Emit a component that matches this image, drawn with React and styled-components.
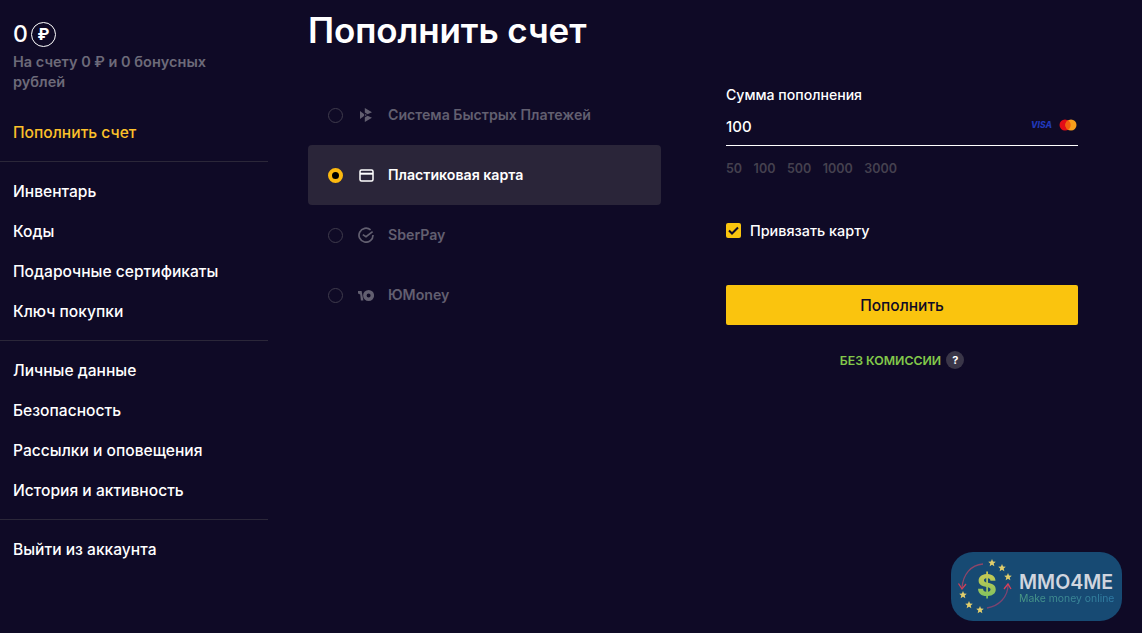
import React from 'react';
import styled, { createGlobalStyle } from 'styled-components';

const GlobalStyle = createGlobalStyle`
  html, body {
    margin: 0;
    padding: 0;
    height: 100%;
    background: #0f0a26;
    overflow: hidden;
  }
  body {
    font-family: Inter, "Liberation Sans", sans-serif;
    color: #fff;
  }
  * { box-sizing: border-box; }
`;

const menuGroups = [
  ['Инвентарь', 'Коды', 'Подарочные сертификаты', 'Ключ покупки'],
  ['Личные данные', 'Безопасность', 'Рассылки и оповещения', 'История и активность'],
  ['Выйти из аккаунта'],
];

const SbpIcon = () => (
  <svg width="12" height="14" viewBox="0 0 12 14" fill="currentColor">
    <path d="M0 3 4 6V8L0 11Z" />
    <path d="M4.800 0 12 4.300 7.500 6.200 4.800 4.500Z" />
    <path d="M4.800 9.500 7.500 7.800 12 9.700 4.800 14Z" />
    <path d="M4.800 5.400 7 6.900 4.800 8.500Z" opacity=".7" />
  </svg>
);

const CardIcon = () => (
  <svg width="15" height="13" viewBox="0 0 15 13" fill="none" stroke="currentColor">
    <rect x="1" y="1" width="13" height="11" rx="1.500" strokeWidth="1.500" />
    <path d="M1 4.700H14" strokeWidth="2" />
  </svg>
);

const SberIcon = () => (
  <svg width="16" height="16" viewBox="0 0 16 16" fill="none" stroke="currentColor" strokeWidth="1.700">
    <path d="M12.600 2.900A7 7 0 1 0 15 8" />
    <path d="M4.800 7.600 8 9.600 14.600 4.600" />
  </svg>
);

const YooIcon = () => (
  <svg width="16" height="11" viewBox="0 0 16 11" fill="currentColor">
    <path d="M0 1H3.600L5.400 10.500H2.900L2.200 4.600 0 3.600Z" />
    <path fillRule="evenodd" d="M10.600 0a5.400 5.400 0 1 1 0 11 5.400 5.400 0 0 1 0-11Zm0 3.500a2 2 0 1 0 0 4 2 2 0 0 0 0-4Z" />
  </svg>
);

const methods = [
  { label: 'Система Быстрых Платежей', icon: <SbpIcon /> },
  { label: 'Пластиковая карта', icon: <CardIcon />, active: true },
  { label: 'SberPay', icon: <SberIcon /> },
  { label: 'ЮMoney', icon: <YooIcon /> },
];

const amounts = [50, 100, 500, 1000, 3000];

const starSpots = [
  [41, 11],
  [51, 16],
  [57, 25],
  [12, 43],
  [18, 53],
  [29, 58],
];

function starPoints(cx, cy, r) {
  const points = [];
  for (let i = 0; i < 10; i++) {
    const radius = i % 2 ? r * 0.45 : r;
    const angle = (Math.PI / 5) * i - Math.PI / 2;
    points.push(`${cx + radius * Math.cos(angle)},${cy + radius * Math.sin(angle)}`);
  }
  return points.join(' ');
}

function Logo() {
  return (
    <Badge>
      <svg width="66" height="69" viewBox="0 0 66 69" fill="none" strokeWidth="1.300">
        <path d="M32 12C20 13 12 22 11 36" stroke="#8f4668" />
        <path d="M7.500 31.500 11 37 15 32" stroke="#cf3f58" />
        <path d="M36 56C48 54 57 45 57 33" stroke="#7d4470" />
        <path d="M53 37 57 32 60 37" stroke="#d8405a" />
        {starSpots.map(([x, y]) => (
          <polygon key={x} points={starPoints(x, y, 4)} fill="#e0cd6c" />
        ))}
      </svg>
      <DollarSign>$</DollarSign>
      <BadgeText>
        <BadgeTitle>MMO4ME</BadgeTitle>
        <BadgeSub>Make money online</BadgeSub>
      </BadgeText>
    </Badge>
  );
}

export default function App() {
  return (
    <Page>
      <GlobalStyle />
      <Sidebar>
        <Balance>
          0 <RubleCircle>₽</RubleCircle>
        </Balance>
        <BalanceNote>На счету 0 ₽ и 0 бонусных рублей</BalanceNote>
        <TopUpLink>Пополнить счет</TopUpLink>
        {menuGroups.map(group => (
          <MenuGroup key={group[0]}>
            {group.map(item => (
              <MenuItem key={item}>{item}</MenuItem>
            ))}
          </MenuGroup>
        ))}
      </Sidebar>
      <Main>
        <Title>Пополнить счет</Title>
        <Columns>
          <Methods>
            {methods.map(m => (
              <Method key={m.label} $active={m.active}>
                <Radio $active={m.active} />
                <MethodIcon>{m.icon}</MethodIcon>
                <MethodLabel>{m.label}</MethodLabel>
              </Method>
            ))}
          </Methods>
          <Form>
            <FieldLabel>Сумма пополнения</FieldLabel>
            <AmountRow>
              <AmountValue>100</AmountValue>
              <PayLogos>
                <VisaMark>VISA</VisaMark>
                <MasterMark>
                  <svg width="18" height="12" viewBox="0 0 18 12">
                    <circle cx="6" cy="6" r="5.500" fill="#e30d17" />
                    <circle cx="12" cy="6" r="5.500" fill="#f89e1b" />
                    <path d="M9 1.300a5.500 5.500 0 0 1 0 9.400 5.500 5.500 0 0 1 0-9.400Z" fill="#f2600f" />
                  </svg>
                </MasterMark>
              </PayLogos>
            </AmountRow>
            <Amounts>
              {amounts.map(a => (
                <span key={a}>{a}</span>
              ))}
            </Amounts>
            <CheckRow>
              <CheckBox>
                <svg width="11" height="9" viewBox="0 0 11 9" fill="none" stroke="#0f0a26" strokeWidth="2">
                  <path d="M1 4.500 4 7.500 10 1.500" />
                </svg>
              </CheckBox>
              Привязать карту
            </CheckRow>
            <SubmitButton>Пополнить</SubmitButton>
            <NoFee>
              БЕЗ КОМИССИИ <Help>?</Help>
            </NoFee>
          </Form>
        </Columns>
      </Main>
      <Logo />
    </Page>
  );
}

const Page = styled.div`
  display: flex;
  height: 633px;
  background: #0f0a26;
`;

const Sidebar = styled.aside`
  width: 268px;
  flex: none;
  padding-top: 20px;
`;

const Balance = styled.div`
  display: flex;
  align-items: center;
  gap: 3px;
  padding-left: 13px;
  height: 28px;
  font-size: 23px;
  font-weight: 500;
`;

const RubleCircle = styled.span`
  display: flex;
  align-items: center;
  justify-content: center;
  width: 25px;
  height: 25px;
  border: 1.5px solid #fff;
  border-radius: 50%;
  font-size: 16px;
  font-weight: 700;
`;

const BalanceNote = styled.div`
  width: 215px;
  margin-top: 4px;
  padding-left: 13px;
  font-size: 14.5px;
  line-height: 20px;
  font-weight: 600;
  color: #6d6a79;
`;

const MenuItem = styled.div`
  height: 40px;
  padding-left: 13px;
  font-size: 15.6px;
  font-weight: 500;
  line-height: 42px;
  color: #fff;
`;

const TopUpLink = styled(MenuItem)`
  margin-top: 20px;
  margin-bottom: 9px;
  color: #fcc02a;
`;

const MenuGroup = styled.div`
  border-top: 1px solid #2b2739;
  padding: 9px 0;
`;

const Main = styled.main`
  flex: 1;
  padding-left: 40px;
`;

const Title = styled.h1`
  margin: 0;
  height: 85px;
  padding-top: 9px;
  font-size: 35px;
  line-height: 42px;
  font-weight: 600;
  letter-spacing: -0.1px;
`;

const Columns = styled.div`
  display: flex;
  gap: 65px;
`;

const Methods = styled.div`
  width: 353px;
  flex: none;
`;

const Method = styled.div`
  display: flex;
  align-items: center;
  height: 60px;
  padding-left: 20px;
  border-radius: 4px;
  font-size: 14.15px;
  font-weight: 600;
  color: ${props => (props.$active ? '#fff' : '#625f70')};
  background: ${props => (props.$active ? '#2a2539' : 'transparent')};
`;

const Radio = styled.span`
  width: 15px;
  height: 15px;
  flex: none;
  border-radius: 50%;
  border: ${props => (props.$active ? '4px solid #fcb90f' : '1px solid #3f3b4c')};
  background: ${props => (props.$active ? '#000' : 'transparent')};
`;

const MethodIcon = styled.span`
  display: flex;
  align-items: center;
  justify-content: center;
  width: 16px;
  height: 16px;
  margin: 0 14px 0 15px;
`;

const MethodLabel = styled.span`
  margin-bottom: 2px;
`;

const Form = styled.div`
  width: 352px;
  flex: none;
  padding-top: 1px;
`;

const FieldLabel = styled.div`
  font-size: 14.1px;
  line-height: 18px;
  font-weight: 500;
`;

const AmountRow = styled.div`
  display: flex;
  align-items: center;
  justify-content: space-between;
  height: 37px;
  margin-top: 5px;
  padding-right: 1px;
  padding-bottom: 1px;
  border-bottom: 1px solid #fff;
`;

const AmountValue = styled.span`
  font-size: 15px;
  font-weight: 500;
`;

const PayLogos = styled.div`
  display: flex;
  align-items: center;
  gap: 7px;
  margin-bottom: 3px;
`;

const VisaMark = styled.span`
  font-size: 8.5px;
  font-weight: 800;
  font-style: italic;
  color: #2038b8;
`;

const MasterMark = styled.span`
  display: flex;
`;

const Amounts = styled.div`
  display: flex;
  gap: 11.5px;
  margin-top: 15px;
  font-size: 12.5px;
  line-height: 16px;
  font-weight: 600;
  color: #45414f;
`;

const CheckRow = styled.div`
  display: flex;
  align-items: center;
  gap: 9px;
  margin-top: 43px;
  height: 20px;
  font-size: 14.4px;
  font-weight: 500;
`;

const CheckBox = styled.span`
  display: flex;
  align-items: center;
  justify-content: center;
  width: 15px;
  height: 15px;
  border-radius: 2px;
  background: #fac40e;
`;

const SubmitButton = styled.button`
  display: block;
  width: 100%;
  height: 40px;
  margin-top: 45px;
  border: none;
  border-radius: 2px;
  background: #fac40e;
  color: #0f0a26;
  font-family: inherit;
  font-size: 15.5px;
  font-weight: 500;
`;

const NoFee = styled.div`
  display: flex;
  align-items: center;
  justify-content: center;
  gap: 5px;
  margin-top: 26px;
  font-size: 12.3px;
  font-weight: 600;
  color: #82c84a;
`;

const Help = styled.span`
  display: flex;
  align-items: center;
  justify-content: center;
  width: 18px;
  height: 18px;
  border-radius: 50%;
  background: #3a3648;
  color: #fff;
  font-size: 11px;
  font-weight: 700;
`;

const Badge = styled.div`
  position: absolute;
  left: 951px;
  top: 552px;
  width: 171px;
  height: 69px;
  display: flex;
  align-items: center;
  gap: 2px;
  border-radius: 22px;
  background: #174a73;
`;

const DollarSign = styled.span`
  position: absolute;
  left: 26px;
  top: 14px;
  font-size: 30px;
  line-height: 38px;
  font-weight: 800;
  color: transparent;
  background: linear-gradient(#e0cd50, #6cbf62);
  background-clip: text;
`;

const BadgeText = styled.div`
  display: flex;
  flex-direction: column;
  margin-top: 3px;
`;

const BadgeTitle = styled.span`
  font-size: 19.6px;
  line-height: 20px;
  font-weight: 600;
  color: #d0d5de;
`;

const BadgeSub = styled.span`
  font-size: 10.4px;
  line-height: 13px;
  color: transparent;
  background: linear-gradient(90deg, #4a9a84, #2f7ba6);
  background-clip: text;
`;
